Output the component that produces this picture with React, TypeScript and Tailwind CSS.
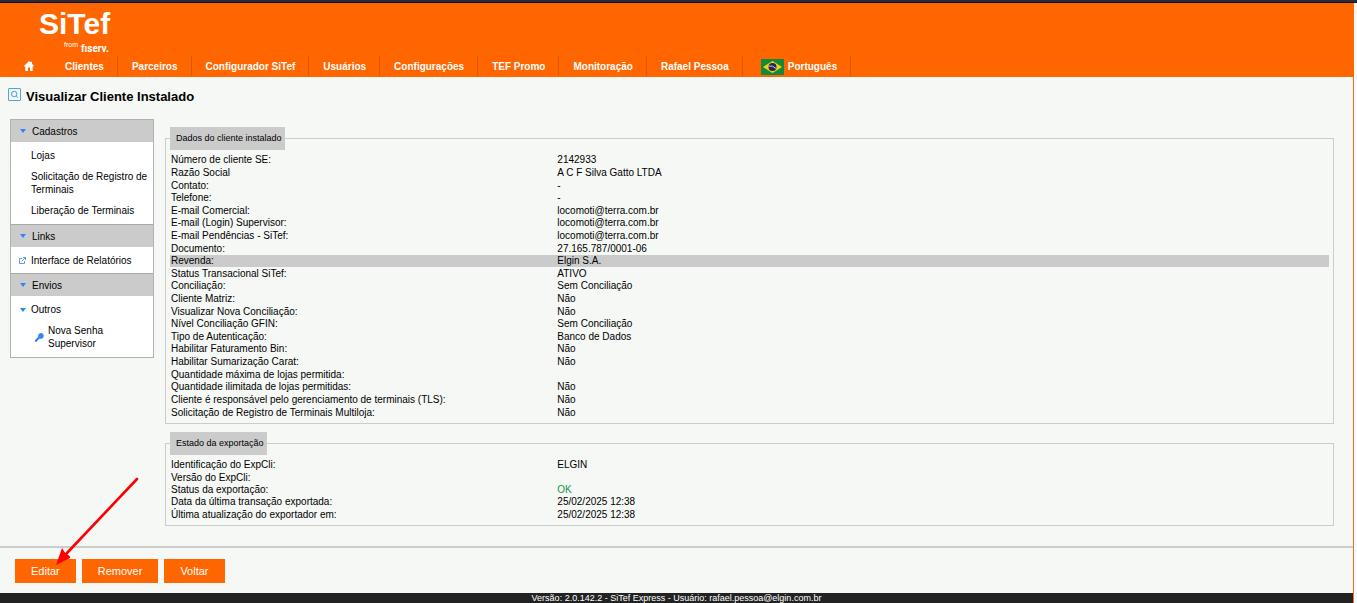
import type { ReactNode } from "react";

const NAV = [
  "Clientes",
  "Parceiros",
  "Configurador SiTef",
  "Usuários",
  "Configurações",
  "TEF Promo",
  "Monitoração",
  "Rafael Pessoa",
];

type Row = { label: string; value: string; highlight?: boolean; ok?: boolean };

const CLIENT_ROWS: Row[] = [
  { label: "Número de cliente SE:", value: "2142933" },
  { label: "Razão Social", value: "A C F Silva Gatto LTDA" },
  { label: "Contato:", value: "-" },
  { label: "Telefone:", value: "-" },
  { label: "E-mail Comercial:", value: "locomoti@terra.com.br" },
  { label: "E-mail (Login) Supervisor:", value: "locomoti@terra.com.br" },
  { label: "E-mail Pendências - SiTef:", value: "locomoti@terra.com.br" },
  { label: "Documento:", value: "27.165.787/0001-06" },
  { label: "Revenda:", value: "Elgin S.A.", highlight: true },
  { label: "Status Transacional SiTef:", value: "ATIVO" },
  { label: "Conciliação:", value: "Sem Conciliação" },
  { label: "Cliente Matriz:", value: "Não" },
  { label: "Visualizar Nova Conciliação:", value: "Não" },
  { label: "Nível Conciliação GFIN:", value: "Sem Conciliação" },
  { label: "Tipo de Autenticação:", value: "Banco de Dados" },
  { label: "Habilitar Faturamento Bin:", value: "Não" },
  { label: "Habilitar Sumarização Carat:", value: "Não" },
  { label: "Quantidade máxima de lojas permitida:", value: "" },
  { label: "Quantidade ilimitada de lojas permitidas:", value: "Não" },
  { label: "Cliente é responsável pelo gerenciamento de terminais (TLS):", value: "Não" },
  { label: "Solicitação de Registro de Terminais Multiloja:", value: "Não" },
];

const EXPORT_ROWS: Row[] = [
  { label: "Identificação do ExpCli:", value: "ELGIN" },
  { label: "Versão do ExpCli:", value: "" },
  { label: "Status da exportação:", value: "OK", ok: true },
  { label: "Data da última transação exportada:", value: "25/02/2025 12:38" },
  { label: "Última atualização do exportador em:", value: "25/02/2025 12:38" },
];

function Logo() {
  return (
    <svg width="84" height="50" viewBox="0 0 84 50" role="img" aria-label="SiTef from fiserv." fill="#fff">
      <text x="1" y="26" fontFamily="Liberation Sans, sans-serif" fontWeight="700" fontSize="30">SiTef</text>
      <text x="26" y="39" fontFamily="Liberation Sans, sans-serif" fontSize="7">from</text>
      <text x="43" y="44" fontFamily="Roboto, sans-serif" fontWeight="700" fontSize="10">fıserv.</text>
    </svg>
  );
}

function HomeIcon() {
  return (
    <svg width="10" height="10" viewBox="0 0 10 10" fill="#fff" aria-hidden="true">
      <path d="M5 0 6.600 1.500V.7H8v2.100l2 2.100-.6.6H8.700V10H6V6.500H4V10H1.300V5.500H.6L0 4.900z" />
    </svg>
  );
}

function Flag() {
  return (
    <svg width="23" height="16" viewBox="0 0 23 16" aria-hidden="true">
      <path fill="#138a3b" d="M0 0h23v16H0z" />
      <path fill="#f3d20f" d="M11.500 2 21 8l-9.500 6L2 8z" />
      <circle cx="11.500" cy="8" r="4" fill="#23235f" />
      <path d="M7.800 7q4.200-.7 7.200 2.500" stroke="#c8cfe0" strokeWidth="1" fill="none" />
    </svg>
  );
}

function TitleIcon() {
  return (
    <svg width="13" height="13" viewBox="0 0 13 13" fill="none" aria-hidden="true">
      <rect x=".5" y=".5" width="12" height="12" rx=".5" fill="#eef7fb" stroke="#5ba3c9" />
      <circle cx="6.200" cy="6" r="2.700" stroke="#5b9fc4" />
      <path d="m8.200 8 1.800 1.800" stroke="#5b9fc4" />
    </svg>
  );
}

function Caret() {
  return (
    <svg width="6" height="4" viewBox="0 0 6 4" aria-hidden="true" className="shrink-0">
      <path fill="#2f86f6" d="M0 0h6L3 4z" />
    </svg>
  );
}

function ExternalIcon() {
  return (
    <svg width="7" height="7" viewBox="0 0 7 7" fill="none" stroke="#4a92ee" aria-hidden="true" className="shrink-0">
      <path d="M3 1.500H.5v5h5V4M4 .5h2.500V3M6.500.5 2.800 4.200" strokeWidth=".9" />
    </svg>
  );
}

function KeyIcon() {
  return (
    <svg width="9" height="9" viewBox="0 0 9 9" fill="#2f86f6" aria-hidden="true" className="shrink-0">
      <path d="M6 0a2.900 2.900 0 1 1-1.200 5.600L3.700 6.700H2.900v1H2V8.800H0V7l3.300-3.300A2.900 2.900 0 0 1 6 0z" />
    </svg>
  );
}

function SectionHeader({ children }: { children: ReactNode }) {
  return (
    <button type="button" className="flex h-[22px] w-full items-center gap-[6px] bg-[#cbcbcb] pl-[9px] text-left">
      <Caret />
      {children}
    </button>
  );
}

function DetailSection({ title, rows, tableClass }: { title: string; rows: Row[]; tableClass: string }) {
  return (
    <fieldset className="min-w-0 border border-[#cbcdca] px-1 pb-1">
      <legend className="mb-1 bg-[#cbcbcb] pr-[3px] pl-[6px] text-[9px] leading-[23px]">{title}</legend>
      <table className={"w-full table-fixed border-collapse text-[10px] leading-[12px] " + tableClass}>
        <tbody>
          {rows.map((row) => (
            <tr key={row.label} className={row.highlight ? "bg-[#cbcbcb]" : ""}>
              <th scope="row" className="w-1/3 px-px py-0 text-left font-normal whitespace-nowrap">{row.label}</th>
              <td className={row.ok ? "px-px py-0 text-[#16964a]" : "px-px py-0"}>{row.value}</td>
            </tr>
          ))}
        </tbody>
      </table>
    </fieldset>
  );
}

function Action({ children }: { children: ReactNode }) {
  return (
    <button type="button" className="h-6 bg-[#ff6600] px-4 text-[11px] text-white">
      {children}
    </button>
  );
}

export default function App() {
  return (
    <div className="min-h-screen bg-[#f8f8f8] pr-[3px] font-['Liberation_Sans',Arial,sans-serif] text-[10px] text-black">
      <div className="-mr-[3px] h-[3px] border-b border-[#111116] bg-[#2b2b35]" />
      <header className="bg-[#ff6600] text-white">
        <div className="h-[53px] pt-[5px] pl-[38px]">
          <Logo />
        </div>
        <nav className="flex h-[21px] items-start leading-[18px]">
          <a href="#inicio" aria-label="Início" className="flex h-[20px] w-[51px] items-center pl-6">
            <HomeIcon />
          </a>
          {NAV.map((item) => (
            <a key={item} href="#menu" className="border-r border-[#d65a0a] pt-[2px] pr-[13px] pl-[14px] font-bold">
              {item}
            </a>
          ))}
          <a href="#idioma" className="flex h-[20px] items-center gap-1 border-r border-[#d65a0a] pt-[2px] pr-[13px] pl-[18px] font-bold">
            <Flag />
            Português
          </a>
        </nav>
      </header>

      <div className="border-r border-[#ee7420] bg-[#f5f8f5]">
        <main>
          <h1 className="flex h-[38px] items-start gap-[5px] pt-[11px] pl-2 text-[13px] leading-[17px] font-bold">
            <TitleIcon />
            Visualizar Cliente Instalado
          </h1>
          <div className="flex items-start gap-[11px] pr-[19px] pl-[10px]">
            <aside className="mt-1 w-[144px] shrink-0 border border-[#b1b3b1] bg-white leading-[13px]">
              <SectionHeader>Cadastros</SectionHeader>
              <div className="flex flex-col gap-2 py-[7px] pl-5">
                <a href="#lojas">Lojas</a>
                <a href="#solicitacao">Solicitação de Registro de Terminais</a>
                <a href="#liberacao">Liberação de Terminais</a>
              </div>
              <div className="border-t border-[#a8a8a8]">
                <SectionHeader>Links</SectionHeader>
              </div>
              <a href="#relatorios" className="flex items-center gap-[5px] pt-[7px] pb-[6px] pl-2">
                <ExternalIcon />
                Interface de Relatórios
              </a>
              <div className="border-t border-[#a8a8a8]">
                <SectionHeader>Envios</SectionHeader>
              </div>
              <div className="flex flex-col gap-2 py-[7px]">
                <button type="button" className="flex items-center gap-[5px] pl-[9px] text-left">
                  <Caret />
                  Outros
                </button>
                <a href="#senha" className="flex items-center gap-1 pr-8 pl-6">
                  <KeyIcon />
                  Nova Senha Supervisor
                </a>
              </div>
            </aside>
            <div className="flex min-w-0 grow flex-col gap-2 pt-3">
              <DetailSection title="Dados do cliente instalado" rows={CLIENT_ROWS} tableClass="h-[265px]" />
              <DetailSection title="Estado da exportação" rows={EXPORT_ROWS} tableClass="h-[62px]" />
            </div>
          </div>
        </main>
        <div className="relative mt-5 flex gap-[6px] border-t-2 border-[#cbcdca] px-[15px] pt-[11px] pb-[10px]">
          <Action>Editar</Action>
          <Action>Remover</Action>
          <Action>Voltar</Action>
          <svg className="pointer-events-none absolute -top-[71px] left-[55px]" width="84" height="90" viewBox="0 0 84 90" aria-hidden="true">
            <path d="M82 2 12 76" stroke="#f00" strokeWidth="2.600" strokeLinecap="round" />
            <path d="M1 88 7 71l2.500 4 5.500 4.500 L15 81z" fill="#f00" />
          </svg>
        </div>
        <footer className="bg-[#222] text-center text-[9px] leading-[10px] text-white">
          Versão: 2.0.142.2 - SiTef Express - Usuário: rafael.pessoa@elgin.com.br
        </footer>
      </div>
    </div>
  );
}
